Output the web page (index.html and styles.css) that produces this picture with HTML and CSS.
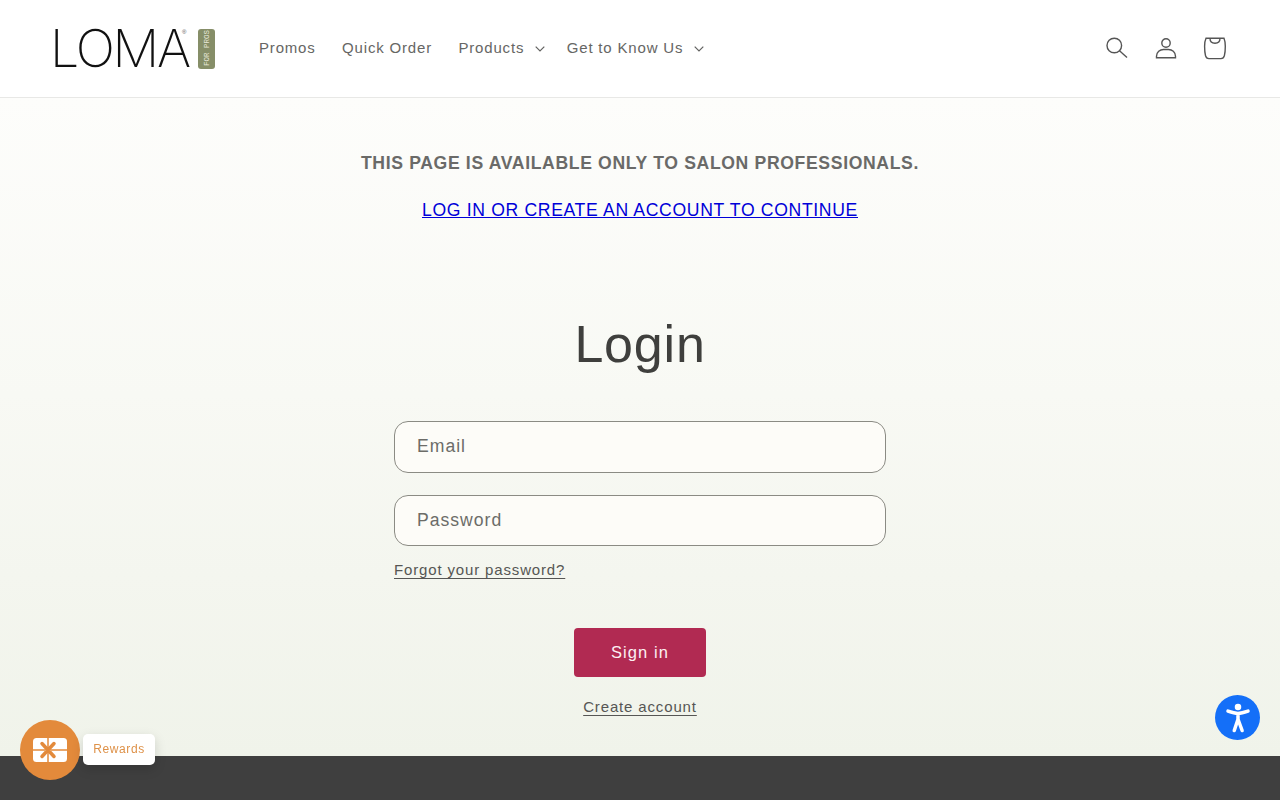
FILE: index.html
```html
<!DOCTYPE html>
<html lang="en">
<head>
<meta charset="utf-8">
<title>Login</title>
<link rel="stylesheet" href="styles.css">
</head>
<body>
<header class="site-header">
  <a class="logo" href="#">
    <span class="logo-word">LOM<span class="logo-word-end">A</span></span><span class="logo-mark">®</span>
    <span class="logo-tag"><span class="logo-tag-text">FOR PROS</span></span>
  </a>
  <nav class="main-nav">
    <a class="nav-item" href="#">Promos</a>
    <a class="nav-item" href="#">Quick Order</a>
    <a class="nav-item nav-drop" href="#">Products
      <svg class="chevron" viewBox="0 0 10 6"><path d="M.7.7 5 5l4.3-4.3"/></svg></a>
    <a class="nav-item nav-drop" href="#">Get to Know Us
      <svg class="chevron" viewBox="0 0 10 6"><path d="M.7.7 5 5l4.3-4.3"/></svg></a>
  </nav>
  <div class="header-icons">
    <a class="icon-btn" href="#" aria-label="Search">
      <svg viewBox="0 0 24 24"><circle cx="9.300" cy="9.500" r="7.300"/><path d="M14.500 14.800 22 21.600"/></svg>
    </a>
    <a class="icon-btn" href="#" aria-label="Account">
      <svg viewBox="0 0 24 24"><circle cx="12" cy="7" r="4.200"/><path d="M2.500 21.800h19v-1.500c0-4.500-3.500-6.800-7-6.800H9.500c-3.500 0-7 2.300-7 6.800z"/></svg>
    </a>
    <a class="icon-btn" href="#" aria-label="Cart">
      <svg viewBox="0 0 24 24"><path d="M3 2.300h18c.8 2 1.300 4.500 1.300 8 0 4-.3 7-.9 9.300-.4 1.600-1.600 3-3.400 3H5.900c-1.800 0-3-1.400-3.400-3-.6-2.300-.9-5.300-.9-9.300 0-3.500.5-6 1.400-8z"/><path d="M7 2.300c0 3 2 5 5 5s5-2 5-5"/></svg>
    </a>
  </div>
</header>

<main class="page">
  <p class="notice">THIS PAGE IS AVAILABLE ONLY TO SALON PROFESSIONALS.</p>
  <p class="notice-link"><a href="#">LOG IN OR CREATE AN ACCOUNT TO CONTINUE</a></p>
  <h1 class="title">Login</h1>
  <form class="login-form">
    <div class="field field-email">Email</div>
    <div class="field field-password">Password</div>
    <a class="forgot text-link" href="#">Forgot your password?</a>
    <button class="submit" type="button">Sign in</button>
    <a class="text-link create" href="#">Create account</a>
  </form>
</main>

<footer class="site-footer"></footer>

<div class="rewards">
  <span class="rewards-circle">
    <svg viewBox="0 0 34 24">
      <rect class="gift-box" x="0" y="0" width="34" height="24" rx="3.500"/>
      <path class="gift-line" d="M15 0v24M0 12h34"/>
      <path class="gift-bow" d="M15 12 9 5.500M15 12l6-6.500M15 12l-6 6.500M15 12l6 6.500"/>
    </svg>
  </span>
  <span class="rewards-label">Rewards</span>
</div>

<a class="a11y" href="#" aria-label="Accessibility">
  <svg viewBox="0 0 24 24">
    <circle class="a11y-head" cx="12" cy="3.200" r="2.600"/>
    <path class="a11y-body" d="M4 6.500c2.800 1 5.500 1.800 8 1.800s5.200-.8 8-1.800M12 8.500v5M12 13 9 22M12 13l3.300 9"/>
  </svg>
</a>
</body>
</html>
```
FILE: styles.css
```css
* { box-sizing: border-box; }
html, body { margin: 0; padding: 0; }
body {
  width: 1280px;
  height: 800px;
  overflow: hidden;
  display: flex;
  flex-direction: column;
  font-family: "Liberation Sans", Arial, sans-serif;
  color: #444441;
  background: #fff;
}
a { color: inherit; text-decoration: none; }

/* header */
.site-header {
  flex: 0 0 98px;
  display: flex;
  align-items: center;
  padding: 0 41px 1px 54px;
  background: #fff;
  border-bottom: 1px solid #e8e8e6;
}
.logo {
  display: flex;
  align-items: center;
  width: 161px;
  height: 42px;
  margin-top: 1px;
  color: #111;
}
.logo-word {
  font-family: Inter, "Liberation Sans", sans-serif;
  font-weight: 150;
  font-size: 52px;
  line-height: 42px;
  letter-spacing: -2.200px;
  width: 130px;
  margin-left: -4px;
  white-space: nowrap;
}
.logo-word-end { letter-spacing: -8px; }
.logo-mark {
  font-size: 6px;
  line-height: 6px;
  margin-left: 2px;
  align-self: flex-start;
  margin-top: 1px;
  color: #555;
}
.logo-tag {
  display: flex;
  align-items: center;
  justify-content: center;
  width: 17px;
  height: 40px;
  margin-left: auto;
  border-radius: 3px;
  background: #868e68;
}
.logo-tag-text {
  writing-mode: vertical-rl;
  transform: rotate(180deg);
  font-family: "Liberation Mono", monospace;
  font-size: 7.500px;
  white-space: nowrap;
  color: #e6e8d8;
}
.main-nav {
  display: flex;
  align-items: center;
  margin: 0 0 2px 44px;
  font-size: 15px;
  letter-spacing: .82px;
  color: #666664;
}
.nav-item { display: flex; align-items: center; margin-right: 26.500px; white-space: nowrap; }
.nav-drop { margin-right: 22px; }
.chevron {
  width: 10px;
  height: 6px;
  margin-left: 10.500px;
  margin-top: 3px;
  fill: none;
  stroke: #626260;
  stroke-width: 1.200;
}
.header-icons { display: flex; margin-left: auto; }
.icon-btn {
  display: flex;
  align-items: center;
  justify-content: center;
  width: 49px;
  height: 49px;
}
.icon-btn svg {
  width: 24px;
  height: 24px;
  fill: none;
  stroke: #555;
  stroke-width: 1.400;
}

/* main */
.page {
  flex: 1;
  display: flex;
  flex-direction: column;
  align-items: center;
  background: linear-gradient(180deg, #fdfdfb 0%, #f8f9f4 45%, #f0f3ea 100%);
}
.notice {
  margin: 54px 0 0;
  font-size: 17.600px;
  line-height: 22px;
  font-weight: 700;
  letter-spacing: .65px;
  color: #6a6a68;
}
.notice-link {
  margin: 25px 0 0;
  font-size: 17.600px;
  line-height: 22px;
  letter-spacing: .66px;
}
.notice-link a { color: #0000d8; text-decoration: underline; }
.title {
  margin: 89px 0 0;
  font-size: 52px;
  line-height: 68px;
  font-weight: 400;
  letter-spacing: .8px;
  color: #3f3f3d;
}
.login-form {
  width: 492px;
  margin-top: 43px;
  display: flex;
  flex-direction: column;
  align-items: center;
}
.field {
  width: 100%;
  display: flex;
  align-items: center;
  padding-left: 22px;
  font-size: 17.600px;
  letter-spacing: 1px;
  color: #6c6c68;
  background: #fdfcf8;
  border: 1px solid #8b8b84;
  border-radius: 14px;
}
.field-email { height: 52px; padding-bottom: 2px; }
.field-password { height: 51px; margin-top: 22px; }
.text-link {
  font-size: 15px;
  line-height: 19px;
  letter-spacing: .85px;
  color: #565654;
  text-decoration: underline;
  text-underline-offset: 3px;
  text-decoration-thickness: 1px;
}
.forgot { align-self: flex-start; margin-top: 14px; }
.submit {
  display: block;
  width: 132px;
  height: 49px;
  margin-top: 49px;
  border: 0;
  border-radius: 4px;
  background: #b12a52;
  color: #fdf0f2;
  font-family: inherit;
  font-size: 16.500px;
  letter-spacing: 1.100px;
}
.create { margin-top: 20px; }

/* footer */
.site-footer { flex: 0 0 44px; background: #3f3f3f; }

/* floating widgets */
.rewards {
  position: fixed;
  left: 20px;
  bottom: 20px;
  display: flex;
  align-items: center;
}
.rewards-circle {
  display: flex;
  align-items: center;
  justify-content: center;
  width: 60px;
  height: 60px;
  border-radius: 50%;
  background: #e38a3b;
}
.rewards-circle svg { width: 34px; height: 24px; }
.gift-box { fill: #fff; }
.gift-line { fill: none; stroke: #e38a3b; stroke-width: 1.500; }
.gift-bow { fill: none; stroke: #e38a3b; stroke-width: 3.500; stroke-linecap: round; }
.rewards-label {
  display: flex;
  align-items: center;
  justify-content: center;
  width: 72px;
  height: 31px;
  margin-left: 3px;
  margin-bottom: 2px;
  border-radius: 5px;
  background: #fff;
  box-shadow: 0 4px 12px rgba(0, 0, 0, .15);
  color: #de9148;
  font-size: 12px;
  letter-spacing: .6px;
}
.a11y {
  position: fixed;
  left: 1215px;
  top: 695px;
  display: flex;
  align-items: center;
  justify-content: center;
  width: 45px;
  height: 45px;
  border-radius: 50%;
  background: #146ff8;
}
.a11y svg { width: 30px; height: 30px; }
.a11y-head { fill: #fff; }
.a11y-body { fill: none; stroke: #fff; stroke-width: 2.800; stroke-linecap: round; }
```
